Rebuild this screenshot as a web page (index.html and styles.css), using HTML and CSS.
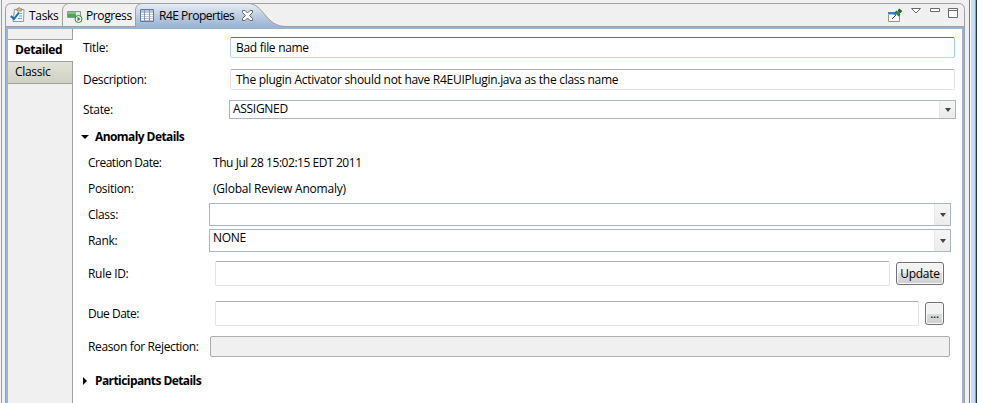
FILE: index.html
```
<!DOCTYPE html>
<html lang="en">
<head>
<meta charset="utf-8">
<title>R4E Properties</title>
<link rel="stylesheet" href="styles.css">
</head>
<body>
<div class="window">
<div class="view">
  <header class="tabbar">
    <svg class="chrome" width="960" height="29" viewBox="0 0 960 29">
      <defs><linearGradient id="tabfill" x1="0" y1="0" x2="0" y2="1"><stop offset="0" stop-color="#e9eef6"/><stop offset=".5" stop-color="#bccde2"/><stop offset="1" stop-color="#99b4d1"/></linearGradient></defs>
      <path d="M.5 29V9.500Q.5 3.500 6.500 3.500H953.500Q959.500 3.500 959.500 9.500V29" fill="#f0f0f0" stroke="#a0a0a0"/>
      <path d="M57.500 26V10Q58 5 63 3.500" fill="none" stroke="#a0a0a0"/>
      <path d="M1 26.500H959" stroke="#a0a0a0"/>
      <path d="M1 27H959V29H1z" fill="#99b4d1"/>
      <path d="M130 27.500V10Q131 4 137 3.500H243C259 3.500 260 26.500 281 26.500V27.500Z" fill="url(#tabfill)"/>
      <path d="M130.500 27V10Q131 4 137 3.500H243C259 3.500 260 26.500 281 26.500" fill="none" stroke="#a0a0a0"/>
    </svg>
    <div class="tab tasks">
      <svg width="16" height="16" viewBox="0 0 16 16"><path d="M4.500 2.500H14L13.500 14.500H3Z" fill="#eef4fb" stroke="#8c99ae"/><path d="M7 4V1.500H8Q9.200-.5 10.500 1.500H11.500V4Z" fill="#d9b779" stroke="#9b8057" stroke-width=".8"/><path d="M9.500 6.500H12M9 9H12M8 11.500H12" stroke="#8198b8"/><path d="M.8 9L4 12 9 5.500" fill="none" stroke="#1470b8" stroke-width="2"/></svg>
      <span>Tasks</span>
    </div>
    <div class="tab progress">
      <svg width="16" height="16" viewBox="0 0 16 16"><path d="M.5 4.500H13.500V10.500H.5Z" fill="#fff" stroke="#8b9690"/><path d="M1 5H9V10H1Z" fill="#4ca653"/><path d="M1 5H9V7H1Z" fill="#82c488"/><path d="M9 5H13V10H9Z" fill="#dfeae0"/><circle cx="11.500" cy="12" r="3.500" fill="#eff9ed" stroke="#32843a"/><path d="M10.500 9.800L13.500 12 10.500 14.200Z" fill="#328b3b"/></svg>
      <span>Progress</span>
    </div>
    <div class="tab props">
      <svg width="14" height="13" viewBox="0 0 14 13"><path d="M.5.5H13.500V12.500H.5Z" fill="#fff" stroke="#637899"/><path d="M1 1H13V3H1Z" fill="#b7c5dc"/><path d="M1 3.500H13M1 5.500H13M1 7.500H13M1 9.500H13M1 11.500H13" stroke="#bac5d5"/><path d="M4.500 1V12M9.500 1V12" stroke="#8798b4"/></svg>
      <span>R4E Properties</span>
      <svg class="close" width="11" height="11" viewBox="0 0 11 11"><path d="M.5.5H3L5.500 3 8 .5H10.500V2.500L7.500 5.500 10.500 8.500V10.500H8L5.500 8 3 10.500H.5V8.500L3.500 5.500.5 2.500Z" fill="#fff" stroke="#6a6a6a"/></svg>
    </div>
    <svg class="tools" width="72" height="16" viewBox="0 0 72 16"><path d="M.5 5.500H11.500V14.500H.5Z" fill="#f8fbff" stroke="#9a9678"/><path d="M0 5H8V8H0Z" fill="#3c7fcb"/><path d="M0 7H6V8H0Z" fill="#9ac4ec"/><path d="M4 12L8 8" stroke="#444"/><path d="M7.500 4.500L11.500 8.500" stroke="#287535" stroke-width="2.500"/><path d="M9 7L12 4" stroke="#3d8b48" stroke-width="3"/><path d="M10.500 2.500L13.500 5" stroke="#1c662b" stroke-width="2.500"/><path d="M23.500 1.500H32.500L28 6Z" fill="#fff" stroke="#6b6b6b"/><path d="M42.500 1.500H51.500V4.500H42.500Z" fill="#fff" stroke="#6b6b6b"/><path d="M60.500 1.500H69.500V10.500H60.500ZM60.500 3.500H69.500" fill="#fff" stroke="#6b6b6b"/></svg>
  </header>
  <div class="body">
    <nav class="side">
      <div class="lead"></div>
      <div class="item on"><span>Detailed</span></div>
      <div class="item off"><span>Classic</span></div>
      <div class="rest"></div>
    </nav>
    <main class="form">
      <div class="row title"><label><span>Title:</span></label><div class="input focus"><span>Bad file name</span></div></div>
      <div class="row desc"><label><span>Description:</span></label><div class="input"><span class="sentence">The plugin Activator should not have R4EUIPlugin.java as the class name</span></div></div>
      <div class="row state"><label><span>State:</span></label><div class="combo"><span>ASSIGNED</span><i></i></div></div>
      <h2 class="anomaly"><svg width="8" height="8" viewBox="0 0 8 8"><path d="M0 2H8L4 6Z"/></svg><span>Anomaly Details</span></h2>
      <section>
        <div class="row text"><label class="tight"><span>Creation Date:</span></label><span class="date">Thu Jul 28 15:02:15 EDT 2011</span></div>
        <div class="row text"><label><span>Position:</span></label><span class="pos">(Global Review Anomaly)</span></div>
        <div class="row pick"><label><span>Class:</span></label><div class="combo"><i></i></div></div>
        <div class="row pick"><label><span>Rank:</span></label><div class="combo"><span>NONE</span><i></i></div></div>
        <div class="row rule"><label><span>Rule ID:</span></label><div class="input"></div><button class="update"><span>Update</span></button></div>
        <div class="row due"><label class="tight"><span>Due Date:</span></label><div class="input"></div><button class="more"><span>...</span></button></div>
        <div class="row reason"><label><span>Reason for Rejection:</span></label><div class="input disabled"></div></div>
      </section>
      <h2 class="people"><svg width="8" height="8" viewBox="0 0 8 8"><path d="M2 0V8L6 4Z"/></svg><span>Participants Details</span></h2>
    </main>
  </div>
</div>
<aside class="edge"></aside>
</div>
</body>
</html>
```
FILE: styles.css
```
* { box-sizing: border-box; }
body { margin: 0; background: #fff; color: #000; font: 12px/16px "Open Sans", "Noto Sans", sans-serif; letter-spacing: -.3px; overflow: hidden; }
span { white-space: nowrap; }
svg { flex: none; display: block; }
.window { display: flex; width: 977px; height: 403px; background: #f0f0f0; border-left: 1px solid #f0f0f0; }
.view { width: 964px; border-left: 1px solid #a0a0a0; padding-left: 3px; display: flex; flex-direction: column; }
.edge { margin-left: 4px; width: 8px; border-left: 1px solid #777; border-right: 1px solid #253840; background: linear-gradient(90deg, #fff 0 1px, #c2def8 1px 5px, #35c7e8 5px); }
.tabbar { position: relative; display: flex; height: 29px; width: 960px; flex: none; }
.chrome { position: absolute; left: 0; top: 0; }
.tab { position: relative; display: flex; padding-top: 8px; }
.tasks { width: 57px; padding-left: 5px; gap: 3px; }
.progress { width: 73px; padding-left: 5px; gap: 3px; letter-spacing: -.4px; }
.tab > svg { margin-top: -1px; }
.props { padding-left: 5px; gap: 5px; letter-spacing: -.5px; }
.props > svg { margin-top: 1px; }
.props > .close { margin: 2px 0 0 3px; }
.tools { position: relative; margin: 7px 5px 0 auto; }
.body { display: flex; flex: 1; background: #fff; border: solid #99b4d1; border-width: 0 2px; outline: 1px solid #a0a0a0; clip-path: inset(0 -1px); width: 958px; margin-left: 1px; }
.side { width: 65px; display: flex; flex-direction: column; flex: none; }
.lead { height: 11px; background: #f0f0f0; border: solid #a0a0a0; border-width: 0 1px 1px 0; }
.item { height: 21px; padding: 2px 0 0 7px; }
.on { font-weight: 700; letter-spacing: -.4px; }
.off { height: 23px; border: solid #a0a0a0; border-width: 1px 1px 1px 0; background: linear-gradient(#e2e2d8, #cfd1c2); }
.rest { flex: 1; background: #f0f0f0; border-right: 1px solid #a0a0a0; }
.form { padding: 8px 7px 0 10px; width: 889px; }
.row { display: flex; }
.row label { flex: none; width: 147px; }
.input { flex: 1; height: 21px; padding: 2px 5px; border: 1px solid #e2e3ea; border-top-color: #abadb3; border-radius: 2px; background: #fff; }
.sentence { letter-spacing: -.285px; }
.focus { border-color: #3d7bad #a4c9e3 #b7d9ed #b5cfe7; }
.title { height: 32px; }
.title label, .desc label { padding-top: 3px; }
.desc { height: 31px; }
.state { height: 27px; }
.state label { width: 146px; padding-top: 2px; }
.state .combo { margin-right: -1px; height: 19px; }
.combo { display: flex; flex: 1; border: 1px solid #abb6c4; padding-left: 3px; height: 23px; background: #fff; }
.combo i { width: 16px; margin-left: auto; background: linear-gradient(#f5f5f5, #ececec); border-left: 1px solid #e8e8e8; display: flex; align-items: center; justify-content: center; }
.combo i::after { content: ""; border: solid transparent; border-width: 4px 3.5px 0; border-top-color: #444; }
h2 { display: flex; align-items: center; gap: 6px; margin: 0 0 0 -2px; font-size: 12px; line-height: 16px; height: 16px; letter-spacing: -.58px; }
.anomaly { margin-top: 2px; }
section { padding: 10px 5px 0; }
section .row label { width: 121px; }
section .pick { margin-right: -1px; }
.text { height: 26px; }
.text > span { margin-left: 4px; }
.tight { letter-spacing: -.5px; }
.date { letter-spacing: -.45px; }
.pos { letter-spacing: -.2px; }
.text + .pick { margin-top: -4px; }
.pick { height: 26px; }
.pick label { padding-top: 4px; }
.rule { height: 40px; margin: 6px 5px 0 0; }
.due { height: 35px; margin-right: 5px; }
section .rule label, section .due label { width: 127px; padding-top: 5px; }
.rule .input, .due .input { height: 25px; }
button { margin: 1px 1px 0 6px; padding: 0; height: 23px; border: 1px solid #707070; border-radius: 3px; font: inherit; letter-spacing: inherit; background: linear-gradient(#f2f2f2 0 50%, #ddd 50%, #cfcfcf); box-shadow: inset 0 0 0 1px #fbfbfb; }
.update { width: 48px; }
.more { width: 19px; }
section .reason label { width: 122px; padding-top: 3px; letter-spacing: -.36px; }
.disabled { background: #f0f0f0; border-color: #afafaf; }
.people { margin-top: 16px; }
```
